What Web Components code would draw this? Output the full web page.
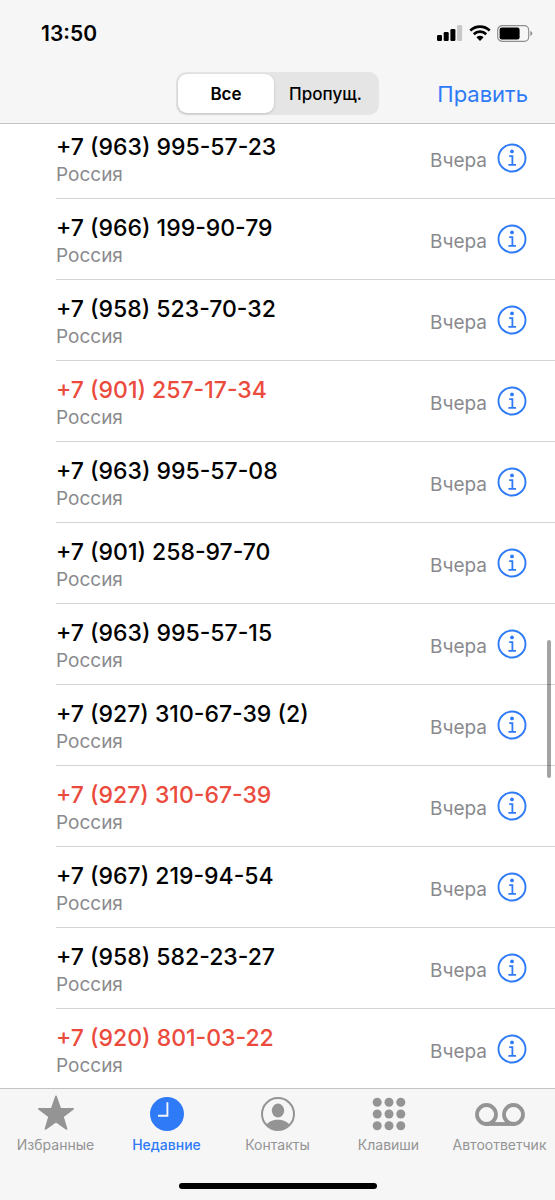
<!DOCTYPE html>
<html lang="ru">
<head>
<meta charset="utf-8">
<meta name="viewport" content="width=device-width, initial-scale=1">
<title>Недавние</title>
<style>
    body {
        margin: 0;
        background: #fff;
        color: #000;
        font-family: Inter, "Liberation Sans", sans-serif;
        --accent: #2f7af6;
        --missed: #eb4b3d;
        --muted: #8a8a8e;
        --tab: #949494;
        --bar: #f6f6f7;
        --bar-line: #c4c4c6;
        --line: #d3d3d5;
    }
</style>
</head>
<body>
<phone-app></phone-app>

<script>
class StatusBar extends HTMLElement {
    connectedCallback() {
        this.attachShadow({ mode: 'open' }).innerHTML = `
        <style>
          :host {
            display: flex;
            align-items: center;
            justify-content: space-between;
            height: 66px;
            padding: 0 22px 0 41px;
          }
          time {
            font-size: 21px;
            font-weight: 600;
          }
          .icons {
            display: flex;
            align-items: center;
            gap: 6px;
          }
          svg {
            display: block;
          }
        </style>
        <time><slot></slot></time>
        <div class="icons">
          <svg width="26" height="16" viewBox="0 0 26 16" aria-hidden="true">
            <rect x="0" y="10" width="5" height="6" rx="1.3"/>
            <rect x="6.7" y="7" width="5" height="9" rx="1.3"/>
            <rect x="13.4" y="4" width="5" height="12" rx="1.3"/>
            <rect x="20.1" y="0" width="5" height="16" rx="1.3" fill="#c8c8c9"/>
          </svg>
          <svg width="22" height="16" viewBox="0 0 22 16" aria-hidden="true">
            <g fill="none" stroke="#000" stroke-width="2.7">
              <path d="M1.3 5.6a13.8 13.8 0 0 1 19.4 0"/>
              <path d="M4.8 9.2a8.8 8.8 0 0 1 12.4 0"/>
            </g>
            <path d="M11 16l-3.6-3.7a5.2 5.2 0 0 1 7.2 0z"/>
          </svg>
          <svg width="36" height="17" viewBox="0 0 36 17" aria-hidden="true">
            <rect x=".7" y=".7" width="31" height="15.6" rx="4.4" fill="none" stroke="#8f8f90" stroke-width="1.2"/>
            <rect x="2.6" y="2.6" width="20" height="11.8" rx="2.2"/>
            <path d="M33.4 6a2.6 2.6 0 0 1 0 5z" fill="#8f8f90"/>
          </svg>
        </div>
      `;
    }
}

class CallFilter extends HTMLElement {
    connectedCallback() {
        this.attachShadow({ mode: 'open' }).innerHTML = `
        <style>
          :host {
            display: grid;
            grid-template-columns: 96px 103px;
            box-sizing: border-box;
            height: 43px;
            padding: 2px;
            border-radius: 10px;
            background: #e5e5e6;
          }
          button {
            padding: 0;
            border: 0;
            border-radius: 9px;
            background: none;
            color: inherit;
            font-family: inherit;
            font-size: 17px;
            font-weight: 500;
          }
          button[aria-pressed="true"] {
            background: #fff;
            font-weight: 600;
            box-shadow: 0 1px 3px rgba(0, 0, 0, 0.16);
          }
        </style>
        <button type="button" aria-pressed="true">Все</button>
        <button type="button" aria-pressed="false">Пропущ.</button>
      `;

        const buttons = [...this.shadowRoot.querySelectorAll('button')];
        buttons.forEach(button => button.addEventListener('click', () => {
            buttons.forEach(one => one.setAttribute('aria-pressed', one === button));
        }));
    }
}

class NavBar extends HTMLElement {
    connectedCallback() {
        this.attachShadow({ mode: 'open' }).innerHTML = `
        <style>
          :host {
            display: grid;
            grid-template-columns: 1fr auto 1fr;
            align-items: center;
            box-sizing: border-box;
            height: 57px;
            padding: 0 27px 2px;
          }
          .filter {
            grid-column: 2;
          }
          .edit {
            justify-self: end;
            padding: 0;
            border: 0;
            background: none;
            color: var(--accent);
            font-family: inherit;
            font-size: 22px;
          }
        </style>
        <call-filter class="filter"></call-filter>
        <button class="edit" type="button">Править</button>
      `;
    }
}

class CallRow extends HTMLElement {
    connectedCallback() {
        this.attachShadow({ mode: 'open' }).innerHTML = `
        <style>
          :host {
            display: flex;
            align-items: center;
            box-sizing: border-box;
            height: 81px;
            margin-left: 56px;
            padding-right: 28px;
            border-bottom: 1px solid var(--line);
          }
          .who {
            flex: 1;
            padding-top: 5px;
          }
          .number {
            font-size: 23px;
            font-weight: 500;
            line-height: 28px;
          }
          :host([missed]) .number {
            color: var(--missed);
          }
          .place, .when {
            color: var(--muted);
            font-size: 19px;
            line-height: 28px;
          }
          .when {
            padding-top: 5px;
          }
          button {
            display: block;
            margin-left: 10px;
            padding: 0;
            border: 0;
            background: none;
            color: var(--accent);
          }
          svg {
            display: block;
          }
        </style>
        <div class="who">
          <div class="number"><slot></slot></div>
          <div class="place">Россия</div>
        </div>
        <div class="when">Вчера</div>
        <button type="button" aria-label="Сведения">
          <svg width="30" height="30" viewBox="0 0 30 30" fill="none" stroke="currentColor">
            <circle cx="15" cy="15" r="13.5" stroke-width="1.9"/>
            <circle cx="15" cy="8.4" r="1.9" fill="currentColor" stroke="none"/>
            <path d="M12.2 13.2h3.2v8.6M11.4 21.9h7.6" stroke-width="1.8"/>
          </svg>
        </button>
      `;
    }
}

class CallList extends HTMLElement {
    connectedCallback() {
        this.attachShadow({ mode: 'open' }).innerHTML = `
        <style>
          :host {
            display: block;
            position: relative;
            min-height: 0;
          }
          .scroller {
            height: 100%;
            overflow-y: auto;
            scrollbar-width: none;
          }
          .thumb {
            position: absolute;
            top: 516px;
            right: 4px;
            width: 4px;
            height: 138px;
            border-radius: 2px;
            background: rgba(0, 0, 0, 0.36);
          }
        </style>
        <div class="scroller" role="list"><slot></slot></div>
        <div class="thumb"></div>
      `;
    }

    scrollToOffset(y) {
        this.shadowRoot.querySelector('.scroller').scrollTop = y;
    }
}

const KEYS = [7.2, 19, 30.8];

const TAB_ICONS = {
    favorites: '<path d="M19 1.3l4.3 12.2 12.9.3-10.3 7.8 3.7 12.4L19 26.6 8.4 34l3.7-12.4L1.8 13.8l12.9-.3z" fill="currentColor" stroke="currentColor" stroke-width="1.6" stroke-linejoin="round"/>',
    recents: '<circle cx="19" cy="19" r="17" fill="currentColor"/><path d="M19.4 7.2v13.6H10" fill="none" stroke="#f6f6f7" stroke-width="1.9"/>',
    contacts: '<circle cx="19" cy="19" r="16" fill="none" stroke="currentColor" stroke-width="2"/><ellipse cx="19" cy="15.6" rx="6.2" ry="7" fill="currentColor"/><path d="M7.6 29.6c2.2-3.2 6.6-4.9 11.4-4.9s9.2 1.7 11.4 4.9a16 16 0 0 1-22.8 0z" fill="currentColor"/>',
    keypad: KEYS.map(y => KEYS.map(x => `<circle cx="${ x }" cy="${ y }" r="4.5" fill="currentColor"/>`).join('')).join(''),
    voicemail: '<g fill="none" stroke="currentColor" stroke-width="3.8"><circle cx="11.5" cy="19.5" r="9.5"/><circle cx="38.5" cy="19.5" r="9.5"/><path d="M11.5 29h27"/></g>'
};

class TabItem extends HTMLElement {
    connectedCallback() {
        const icon = this.getAttribute('icon');
        const width = icon === 'voicemail' ? 50 : 38;

        this.attachShadow({ mode: 'open' }).innerHTML = `
        <style>
          :host {
            display: block;
            color: var(--tab);
          }
          :host([active]) {
            color: var(--accent);
          }
          a {
            display: flex;
            flex-direction: column;
            align-items: center;
            color: inherit;
            text-decoration: none;
            font-size: 14px;
            font-weight: 400;
            line-height: 24px;
            white-space: nowrap;
          }
          :host([active]) a {
            font-weight: 500;
          }
          svg {
            display: block;
          }
        </style>
        <a href="#${ icon }" ${ this.hasAttribute('active') ? 'aria-current="page"' : '' }>
          <svg width="${ width }" height="38" viewBox="0 0 ${ width } 38" aria-hidden="true">${ TAB_ICONS[icon] }</svg>
          <span><slot></slot></span>
        </a>
      `;
    }
}

class TabBar extends HTMLElement {
    connectedCallback() {
        this.attachShadow({ mode: 'open' }).innerHTML = `
        <style>
          :host {
            display: flex;
            flex-direction: column;
            justify-content: space-between;
            align-items: center;
            box-sizing: border-box;
            height: 112px;
            padding: 6px 0 11px;
            border-top: 1px solid var(--bar-line);
            background: var(--bar);
          }
          nav {
            display: grid;
            grid-template-columns: repeat(5, minmax(0, 1fr));
            width: 100%;
          }
          .home {
            width: 198px;
            height: 6px;
            border-radius: 3px;
            background: #000;
          }
        </style>
        <nav><slot></slot></nav>
        <div class="home"></div>
      `;
    }
}

class PhoneApp extends HTMLElement {
    connectedCallback() {
        const calls = [
            ['+7 (963) 995-57-23'],
            ['+7 (966) 199-90-79'],
            ['+7 (958) 523-70-32'],
            ['+7 (901) 257-17-34', true],
            ['+7 (963) 995-57-08'],
            ['+7 (901) 258-97-70'],
            ['+7 (963) 995-57-15'],
            ['+7 (927) 310-67-39 (2)'],
            ['+7 (927) 310-67-39', true],
            ['+7 (967) 219-94-54'],
            ['+7 (958) 582-23-27'],
            ['+7 (920) 801-03-22', true]
        ];

        this.attachShadow({ mode: 'open' }).innerHTML = `
        <style>
          :host {
            display: grid;
            grid-template-rows: auto minmax(0, 1fr) auto;
            height: 100vh;
          }
          header {
            border-bottom: 1px solid var(--bar-line);
            background: var(--bar);
          }
        </style>
        <header>
          <status-bar>13:50</status-bar>
          <nav-bar></nav-bar>
        </header>
        <call-list>
          ${ calls.map(([number, missed]) =>
              `<call-row role="listitem" ${ missed ? 'missed' : '' }>${ number }</call-row>`).join('') }
        </call-list>
        <tab-bar>
          <tab-item icon="favorites">Избранные</tab-item>
          <tab-item icon="recents" active>Недавние</tab-item>
          <tab-item icon="contacts">Контакты</tab-item>
          <tab-item icon="keypad">Клавиши</tab-item>
          <tab-item icon="voicemail">Автоответчик</tab-item>
        </tab-bar>
      `;

        // needs the bars in place, otherwise the list has nothing to scroll
        this.shadowRoot.querySelector('call-list').scrollToOffset(6);
    }
}

customElements.define('status-bar', StatusBar);
customElements.define('call-filter', CallFilter);
customElements.define('nav-bar', NavBar);
customElements.define('call-row', CallRow);
customElements.define('call-list', CallList);
customElements.define('tab-item', TabItem);
customElements.define('tab-bar', TabBar);
customElements.define('phone-app', PhoneApp);
</script>
</body>
</html>
